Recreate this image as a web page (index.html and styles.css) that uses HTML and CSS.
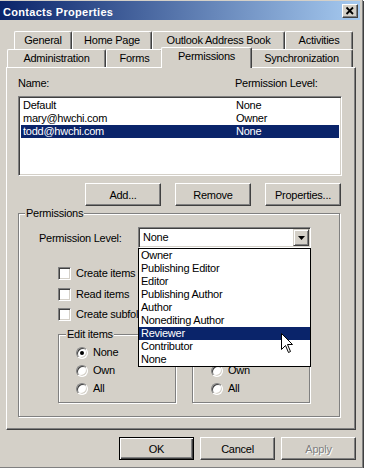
FILE: index.html
```html
<!DOCTYPE html>
<html>
<head>
<meta charset="utf-8">
<link rel="stylesheet" href="styles.css">
</head>
<body>
<div class="window">
  <div class="titlebar">
    <span class="title">Contacts Properties</span>
    <span class="close"><svg width="14" height="12" viewBox="0 0 14 12"><path d="M3.5 2.5 L10 9 M10 2.5 L3.5 9" stroke="#000" stroke-width="1.8" fill="none"/></svg></span>
  </div>

  <div class="tabs">
    <div class="tabrow back">
      <div class="tab t-general">General</div>
      <div class="tab t-home">Home Page</div>
      <div class="tab t-oab">Outlook Address Book</div>
      <div class="tab t-act">Activities</div>
    </div>
    <div class="tabrow front">
      <div class="tab t-admin">Administration</div>
      <div class="tab t-forms">Forms</div>
      <div class="tab t-perm sel">Permissions</div>
      <div class="tab t-sync">Synchronization</div>
    </div>
  </div>

  <div class="panel">
    <div class="list-head"><span class="c1">Name:</span><span class="c2">Permission Level:</span></div>
    <div class="listbox">
      <div class="row"><span class="c1">Default</span><span class="c2">None</span></div>
      <div class="row"><span class="c1">mary@hwchi.com</span><span class="c2">Owner</span></div>
      <div class="row selrow"><span class="c1">todd@hwchi.com</span><span class="c2">None</span></div>
    </div>
    <div class="btnrow">
      <div class="btn w76">Add...</div>
      <div class="btn w76">Remove</div>
      <div class="btn w76">Properties...</div>
    </div>

    <div class="group perms">
      <div class="glabel">Permissions</div>
      <div class="level-row">
        <span class="level-label">Permission Level:</span>
        <div class="combo">
          <span class="combo-text">None</span>
          <span class="combo-btn"><svg width="7" height="4" viewBox="0 0 7 4"><path d="M0 0 H7 L3.5 4 Z" fill="#000"/></svg></span>
          <div class="droplist">
            <div class="item">Owner</div>
            <div class="item">Publishing Editor</div>
            <div class="item">Editor</div>
            <div class="item">Publishing Author</div>
            <div class="item">Author</div>
            <div class="item">Nonediting Author</div>
            <div class="item hi">Reviewer</div>
            <div class="item">Contributor</div>
            <div class="item">None</div>
          </div>
        </div>
      </div>
      <div class="checks">
        <div class="check"><span class="cb"></span><span>Create items</span></div>
        <div class="check"><span class="cb"></span><span>Read items</span></div>
        <div class="check"><span class="cb"></span><span>Create subfolders</span></div>
      </div>
      <div class="subgroups">
        <div class="group sub">
          <div class="glabel small">Edit items</div>
          <div class="radio"><span class="rb on"></span><span>None</span></div>
          <div class="radio"><span class="rb"></span><span>Own</span></div>
          <div class="radio"><span class="rb"></span><span>All</span></div>
        </div>
        <div class="group sub right">
          <div class="hidden-top"></div>
          <div class="radio"><span class="rb"></span><span>Own</span></div>
          <div class="radio"><span class="rb"></span><span>All</span></div>
        </div>
      </div>
    </div>
  </div>

  <div class="footer">
    <div class="btn w75 default">OK</div>
    <div class="btn w75">Cancel</div>
    <div class="btn w75 disabled">Apply</div>
  </div>
</div>

<svg class="cursor" width="13" height="21" viewBox="0 0 13 21">
  <path d="M0.5 0.5 V16.5 L4.5 12.5 L7.5 19.5 L9.5 18.5 L6.5 11.5 H11.5 Z" fill="#fff" stroke="#000" stroke-width="1" stroke-linejoin="miter"/>
</svg>
</body>
</html>
```
FILE: styles.css
```css
* { box-sizing: border-box; }

body {
  margin: 0;
  background: #fff;
  font-family: "Liberation Sans", Arial, sans-serif;
  font-size: 11px;
  letter-spacing: -0.25px;
  color: #000;
  position: relative;
}

.window {
  width: 363px;
  height: 468px;
  background: #d4d0c8;
  border-right: 1px solid #808080;
  border-bottom: 1px solid #808080;
  box-shadow: 1px 1px 0 #404040;
  padding-top: 1px;
}

/* title bar */
.titlebar {
  height: 19px;
  width: 360px;
  background: linear-gradient(to right, #0a246a, #a6caf0);
  display: flex;
  align-items: center;
  padding-left: 3px;
}
.title {
  color: #fff;
  font-weight: bold;
  letter-spacing: 0.3px;
  padding-top: 2px;
}
.close {
  margin-left: auto;
  margin-right: 2px;
  width: 16px;
  height: 14px;
  background: #d4d0c8;
  border: 1px solid;
  border-color: #fff #404040 #404040 #fff;
  box-shadow: inset -1px -1px 0 #808080;
  display: flex;
  align-items: center;
  justify-content: center;
}
.close svg { display: block; }

/* tabs */
.tabs {
  margin-top: 11px;
  height: 36px;
  position: relative;
  z-index: 2;
}
.tabrow {
  display: flex;
  height: 18px;
  align-items: flex-start;
}
.tabrow.back { margin-left: 14px; }
.tabrow.front { margin-left: 7px; }
.tab {
  height: 18px;
  line-height: 17px;
  text-align: center;
  background: #d4d0c8;
  border-left: 1px solid #fff;
  border-top: 1px solid #fff;
  border-right: 1px solid #404040;
  box-shadow: inset -1px 0 0 #808080;
  border-radius: 2px 2px 0 0;
  white-space: nowrap;
}
.t-general { width: 58px; }
.t-home { width: 80px; }
.t-oab { width: 133px; }
.t-act { width: 68px; }
.t-admin { width: 99px; }
.t-forms { width: 57px; }
.t-perm { width: 87px; }
.t-sync { width: 103px; }
.tab.sel {
  width: 91px;
  height: 21px;
  margin: -2px -2px 0 -2px;
  line-height: 17px;
  position: relative;
  z-index: 3;
}

/* panel */
.panel {
  margin-left: 6px;
  width: 350px;
  height: 363px;
  border-left: 1px solid #fff;
  border-top: 1px solid #fff;
  border-right: 1px solid #404040;
  border-bottom: 1px solid #404040;
  box-shadow: inset -1px -1px 0 #808080;
  padding: 9px 0 0 11px;
}

.list-head {
  display: flex;
  line-height: 13px;
}
.list-head .c1 { width: 217px; }

.listbox {
  margin-top: 6px;
  width: 324px;
  height: 80px;
  background: #fff;
  border: 1px solid;
  border-color: #808080 #fff #fff #808080;
  box-shadow: inset 1px 1px 0 #404040, inset -1px -1px 0 #d4d0c8;
  padding: 2px 2px;
}
.row {
  display: flex;
  line-height: 13px;
  height: 13px;
  padding-left: 2px;
}
.row .c1 { width: 213px; }
.row.selrow { background: #0a246a; color: #fff; }

.btnrow {
  margin-top: 7px;
  width: 323px;
  display: flex;
  justify-content: flex-end;
  gap: 14px;
}

.btn {
  height: 23px;
  background: #d4d0c8;
  border: 1px solid;
  border-color: #fff #404040 #404040 #fff;
  box-shadow: inset -1px -1px 0 #808080;
  display: flex;
  align-items: center;
  justify-content: center;
  white-space: nowrap;
}
.w76 { width: 76px; }
.w75 { width: 75px; }
.btn.default {
  border-color: #000;
  box-shadow: inset 1px 1px 0 #fff, inset -1px -1px 0 #404040, inset -2px -2px 0 #808080;
}
.btn.disabled {
  color: #808080;
  text-shadow: 1px 1px 0 #fff;
}

/* group boxes */
.group {
  border: 1px solid #808080;
  box-shadow: inset 1px 1px 0 #fff, 1px 1px 0 #fff;
}
.glabel {
  width: max-content;
  background: #d4d0c8;
  line-height: 13px;
  margin: -7px 0 0 6px;
  padding: 0 1px;
}
.perms {
  margin-top: 7px;
  width: 322px;
  padding-bottom: 13px;
}

.level-row {
  margin-top: 7px;
  height: 21px;
  display: flex;
  align-items: center;
  padding-left: 20px;
}
.level-label { width: 99px; }

.combo {
  position: relative;
  width: 173px;
  height: 21px;
  background: #fff;
  border: 1px solid;
  border-color: #808080 #fff #fff #808080;
  box-shadow: inset 1px 1px 0 #404040, inset -1px -1px 0 #d4d0c8;
  padding: 1px;
  display: flex;
  align-items: center;
}
.combo-text {
  flex: 1;
  padding-left: 3px;
  line-height: 13px;
}
.combo-btn {
  width: 16px;
  height: 17px;
  background: #d4d0c8;
  border: 1px solid;
  border-color: #d4d0c8 #404040 #404040 #d4d0c8;
  box-shadow: inset 1px 1px 0 #fff, inset -1px -1px 0 #808080;
  display: flex;
  align-items: center;
  justify-content: center;
}
.combo-btn svg { display: block; }

.droplist {
  position: absolute;
  left: -1px;
  top: 20px;
  width: 173px;
  border: 1px solid #000;
  background: #fff;
  z-index: 5;
}
.item {
  height: 13px;
  line-height: 13px;
  padding-left: 2px;
  white-space: nowrap;
}
.item.hi { background: #0a246a; color: #fff; }

.checks {
  margin-top: 19px;
  padding-left: 39px;
  display: grid;
  grid-template-columns: 134px;
  grid-auto-rows: 13px;
  row-gap: 7.5px;
}
.check {
  display: flex;
  align-items: center;
  gap: 5px;
  line-height: 13px;
  white-space: nowrap;
}
.cb {
  width: 13px;
  height: 13px;
  flex: none;
  background: #fff;
  border: 1px solid;
  border-color: #808080 #fff #fff #808080;
  box-shadow: inset 1px 1px 0 #404040, inset -1px -1px 0 #d4d0c8;
}

.subgroups {
  margin-top: 13px;
  padding-left: 39px;
  display: flex;
  gap: 16px;
}
.sub {
  width: 118px;
  height: 69px;
  padding-left: 17px;
}
.sub .glabel { margin-left: -10px; }
.sub.right { padding-left: 18px; }
.hidden-top { height: 24px; }

.radio {
  display: flex;
  align-items: center;
  gap: 5px;
  height: 13px;
  line-height: 13px;
  margin-top: 5px;
}
.rb {
  width: 12px;
  height: 12px;
  flex: none;
  border-radius: 50%;
  background: #fff;
  border: 1px solid;
  border-color: #808080 #fff #fff #808080;
  box-shadow: inset 1px 1px 0 #404040, inset -1px -1px 0 #d4d0c8;
  position: relative;
}
.rb.on::after {
  content: "";
  position: absolute;
  left: 3px;
  top: 3px;
  width: 4px;
  height: 4px;
  border-radius: 50%;
  background: #000;
}

.footer {
  margin-top: 7px;
  padding-right: 6px;
  display: flex;
  justify-content: flex-end;
  gap: 6px;
}

.cursor {
  position: absolute;
  left: 281px;
  top: 333px;
  z-index: 10;
}
```
